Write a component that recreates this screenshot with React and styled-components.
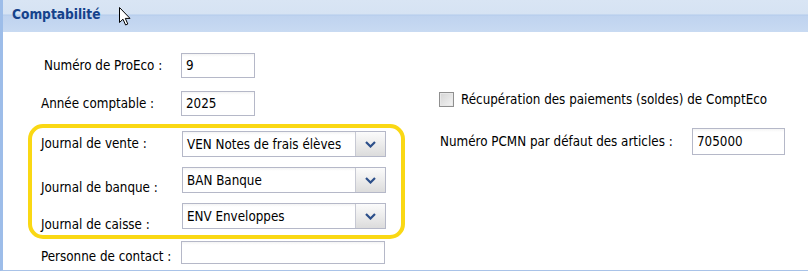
import styled, { createGlobalStyle } from 'styled-components';

const GlobalStyle = createGlobalStyle`
  html, body {
    margin: 0;
    padding: 0;
    background: #ffffff;
  }
  body {
    font-family: "DejaVu Sans Condensed", "DejaVu Sans", sans-serif;
    font-size: 13.3px;
    color: #000;
  }
`;

export default function App() {
  return (
    <>
      <GlobalStyle />
      <Panel>
        <Header>
          <Title>Comptabilité</Title>
          <Pointer viewBox="0 0 13 19" width="13" height="19">
            <path
              d="M0.5 0.5 L0.5 15.5 L4 12.2 L6.6 18 L8.8 17 L6.3 11.4 L11 11.4 Z"
              fill="#fff"
              stroke="#000"
              strokeWidth="1"
              strokeLinejoin="miter"
            />
          </Pointer>
        </Header>
        <Body>
          <LeftCol>
            <Row $top={21}>
              <Label $shift={3}>Numéro de ProEco :</Label>
              <TextInput $width={74}>9</TextInput>
            </Row>
            <Row $top={13}>
              <Label>Année comptable :</Label>
              <TextInput $width={74}>2025</TextInput>
            </Row>
            <Highlight>
              <Row $top={0} $inset={9}>
                <Label $offset={-1}>Journal de vente :</Label>
                <Select value="VEN Notes de frais élèves" />
              </Row>
              <Row $top={10} $inset={9}>
                <Label $offset={7}>Journal de banque :</Label>
                <Select value="BAN Banque" />
              </Row>
              <Row $top={10} $inset={9}>
                <Label $offset={8}>Journal de caisse :</Label>
                <Select value="ENV Enveloppes" />
              </Row>
            </Highlight>
            <Row $top={2}>
              <Label $offset={4}>Personne de contact :</Label>
              <TextInput $width={204} $height={23} />
            </Row>
          </LeftCol>
          <RightCol>
            <CheckRow>
              <Checkbox />
              <span>Récupération des paiements (soldes) de ComptEco</span>
            </CheckRow>
            <PcmnRow>
              <PcmnLabel>Numéro PCMN par défaut des articles :</PcmnLabel>
              <TextInput $width={93} $height={27}>705000</TextInput>
            </PcmnRow>
          </RightCol>
        </Body>
      </Panel>
    </>
  );
}

function Select({ value }) {
  return (
    <SelectBox>
      <SelectText>{value}</SelectText>
      <Trigger>
        <svg width="11" height="7" viewBox="0 0 11 7">
          <path d="M1 1 L5.5 5.5 L10 1" fill="none" stroke="#2c4f8a" strokeWidth="2.2" />
        </svg>
      </Trigger>
    </SelectBox>
  );
}

const Panel = styled.div`
  width: 805px;
  height: 270px;
  border-left: 3px solid #9dbde9;
  border-bottom: 1px solid #a9c3e8;
  background: #fff;
  box-sizing: content-box;
  display: flex;
  flex-direction: column;
`;

const Header = styled.div`
  position: relative;
  height: 32px;
  box-sizing: border-box;
  padding: 6px 0 0 9px;
  background: linear-gradient(
    to bottom,
    #d9e5f4 0px,
    #d6e3f3 14px,
    #b3cbec 15px,
    #bfd3ef 16px,
    #c8daf2 32px
  );
`;

const Title = styled.div`
  font-family: "DejaVu Sans Condensed", "DejaVu Sans", sans-serif;
  font-weight: bold;
  font-size: 13.6px;
  color: #15428b;
`;

const Pointer = styled.svg`
  position: absolute;
  left: 116px;
  top: 7px;
`;

const Body = styled.div`
  flex: 1;
  display: flex;
  align-items: flex-start;
`;

const LeftCol = styled.div`
  width: 377px;
  margin-left: 25px;
  display: flex;
  flex-direction: column;
`;

const Row = styled.div`
  display: flex;
  align-items: center;
  margin-top: ${(p) => p.$top}px;
  padding-left: ${(p) => p.$inset ?? 13}px;
`;

const Label = styled.div`
  width: 140px;
  flex: none;
  padding-left: ${(p) => p.$shift || 0}px;
  box-sizing: border-box;
  position: relative;
  top: ${(p) => p.$offset || 0}px;
  white-space: nowrap;
`;

const TextInput = styled.div`
  width: ${(p) => p.$width}px;
  height: ${(p) => p.$height || 25}px;
  box-sizing: border-box;
  border: 1px solid #b5b8c8;
  background: linear-gradient(to bottom, #f4f4f4 0px, #ffffff 3px);
  padding: 0 4px;
  display: flex;
  align-items: center;
  white-space: nowrap;
`;

const Highlight = styled.div`
  margin-top: 8px;
  width: 377px;
  box-sizing: border-box;
  border: 4px solid #fad814;
  border-radius: 15px;
  padding: 3px 15px 6px 0;
  display: flex;
  flex-direction: column;
`;

const SelectBox = styled.div`
  width: 204px;
  height: 26px;
  margin-left: 1px;
  box-sizing: border-box;
  border: 1px solid #b5b8c8;
  display: flex;
  background: linear-gradient(to bottom, #f4f4f4 0px, #ffffff 3px);
`;

const SelectText = styled.div`
  flex: 1;
  padding: 0 4px;
  display: flex;
  align-items: center;
  white-space: nowrap;
  overflow: hidden;
`;

const Trigger = styled.div`
  width: 29px;
  flex: none;
  border-left: 1px solid #c7c9d3;
  background: linear-gradient(to bottom, #fbfbfb 0%, #ececec 50%, #dcdcdc 100%);
  display: flex;
  align-items: center;
  justify-content: center;
`;

const RightCol = styled.div`
  margin-left: 34px;
  display: flex;
  flex-direction: column;
`;

const CheckRow = styled.div`
  display: flex;
  align-items: center;
  gap: 7px;
  margin-top: 60px;
  white-space: nowrap;
`;

const Checkbox = styled.div`
  width: 15px;
  height: 15px;
  box-sizing: border-box;
  border: 1px solid #8f8f8f;
  background: linear-gradient(to bottom right, #d4d4d4, #f4f4f4);
  box-shadow: inset 0 0 0 1px #e8e8e8;
`;

const PcmnRow = styled.div`
  display: flex;
  align-items: center;
  margin-top: 21px;
  margin-left: 1px;
`;

const PcmnLabel = styled.div`
  width: 252px;
  flex: none;
  white-space: nowrap;
`;
